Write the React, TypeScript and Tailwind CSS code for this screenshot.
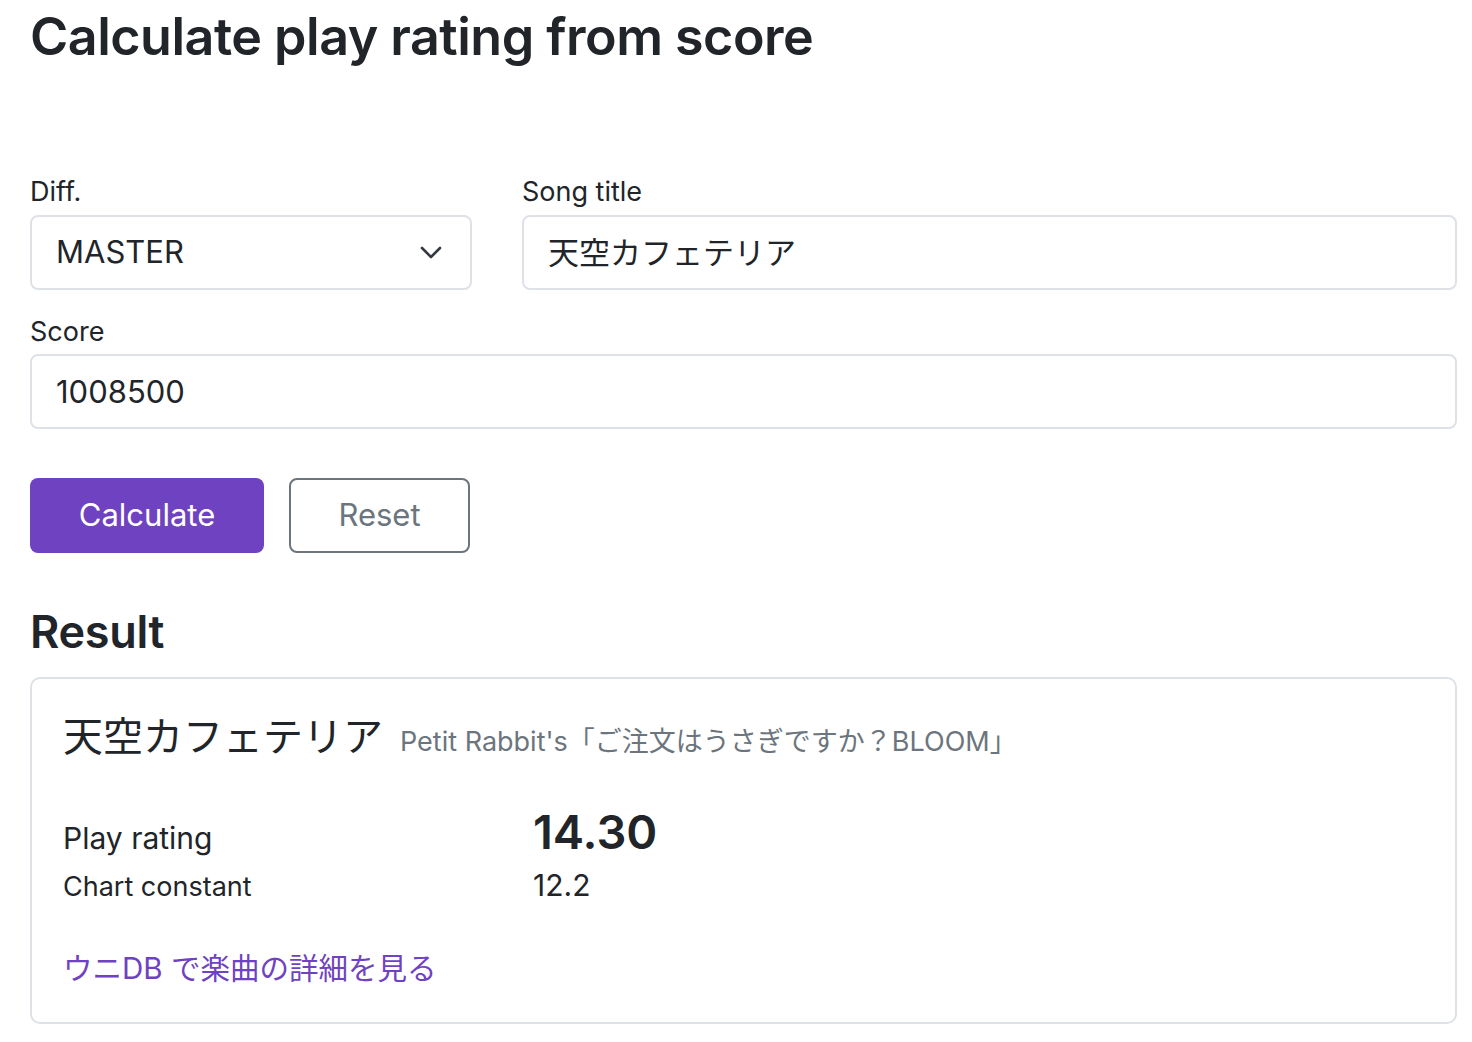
import React, { useState } from 'react';

const font = { fontFamily: 'Inter, "Noto Sans CJK JP", sans-serif' };

export default function App() {
  const [diff, setDiff] = useState('MASTER');
  const [title, setTitle] = useState('天空カフェテリア');
  const [score, setScore] = useState('1008500');

  return (
    <div className="min-h-screen bg-white text-[#212529] pl-[30px] pr-[15px]" style={font}>
      {/* Page title */}
      <h1 className="pt-[6px] text-[52px] leading-[62px] font-semibold tracking-[-0.5px]">
        Calculate play rating from score
      </h1>

      {/* Form */}
      <div className="mt-[104px] flex gap-[50px]">
        <div className="w-[442px]">
          <label className="block text-[27px] leading-[40px] mb-[3px]">Diff.</label>
          <div className="relative">
            <select
              value={diff}
              onChange={(e) => setDiff(e.target.value)}
              className="w-full h-[75px] appearance-none rounded-[8px] border-2 border-[#dee2e6] bg-white pl-[24px] text-[31px] text-[#212529] outline-none"
            >
              <option>BASIC</option>
              <option>ADVANCED</option>
              <option>EXPERT</option>
              <option>MASTER</option>
              <option>ULTIMA</option>
            </select>
            <svg
              className="pointer-events-none absolute right-[30px] top-[29px]"
              width="22"
              height="16"
              viewBox="0 0 22 16"
              fill="none"
            >
              <path d="M2 4l9 9 9-9" stroke="#343a40" strokeWidth="2.6" strokeLinecap="round" strokeLinejoin="round" />
            </svg>
          </div>
        </div>
        <div className="flex-1">
          <label className="block text-[27px] leading-[40px] mb-[3px]">Song title</label>
          <input
            value={title}
            onChange={(e) => setTitle(e.target.value)}
            className="w-full h-[75px] rounded-[8px] border-2 border-[#dee2e6] bg-white px-[24px] pb-[4px] text-[31px] text-[#212529] outline-none"
          />
        </div>
      </div>

      <div className="mt-[22px]">
        <label className="block text-[27px] leading-[40px] mb-[2px]">Score</label>
        <input
          value={score}
          onChange={(e) => setScore(e.target.value)}
          className="w-full h-[75px] rounded-[8px] border-2 border-[#dee2e6] bg-white px-[24px] text-[31px] text-[#212529] outline-none"
        />
      </div>

      <div className="mt-[49px] flex gap-[25px]">
        <button className="w-[234px] h-[75px] rounded-[8px] bg-[#6f42c1] text-white text-[31px]">
          Calculate
        </button>
        <button className="w-[181px] h-[75px] rounded-[8px] border-2 border-[#6c757d] bg-white text-[#6c757d] text-[31px]">
          Reset
        </button>
      </div>

      {/* Result */}
      <h2 className="mt-[52px] text-[45px] leading-[54px] font-semibold tracking-[-0.3px]">Result</h2>

      <div className="mt-[18px] w-full rounded-[10px] border-2 border-[#dee2e6] px-[31px] pt-[30px] pb-[30px]">
        <div className="flex items-baseline gap-[17px]">
          <span className="text-[40px] leading-[56px]">天空カフェテリア</span>
          <span className="text-[27px] text-[#6c757d]">Petit Rabbit's「ご注文はうさぎですか？BLOOM」</span>
        </div>

        <div className="mt-[40px] grid grid-cols-[470px_1fr] items-baseline">
          <div className="text-[30px] leading-[48px]">Play rating</div>
          <div className="text-[47px] leading-[54px] font-semibold">14.30</div>
          <div className="text-[27px] leading-[46px]">Chart constant</div>
          <div className="text-[30px] leading-[46px]">12.2</div>
        </div>

        <a href="#" className="mt-[34px] block text-[29.5px] leading-[48px] text-[#6f42c1]">
          ウニDB で楽曲の詳細を見る
        </a>
      </div>
    </div>
  );
}
